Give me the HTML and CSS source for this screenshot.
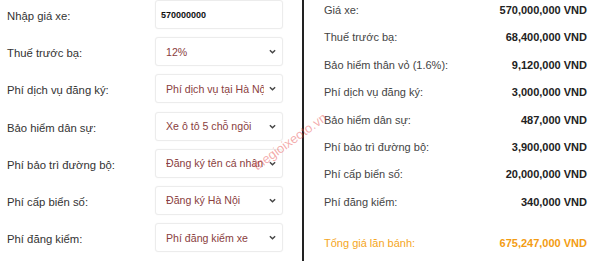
FILE: index.html
```html
<!DOCTYPE html>
<html lang="vi">
<head>
<meta charset="utf-8">
<link rel="stylesheet" href="styles.css">
</head>
<body>
<div class="page">
  <div class="form">
    <div class="row"><span class="label">Nhập giá xe:</span><div class="box input">570000000</div></div>
    <div class="row"><span class="label">Thuế trước bạ:</span><div class="box select"><span class="val">12%</span><svg class="chev" viewBox="0 0 8 5"><polyline points="1,1 4,4 7,1"/></svg></div></div>
    <div class="row"><span class="label">Phí dịch vụ đăng ký:</span><div class="box select"><span class="val">Phí dịch vụ tại Hà Nội</span><svg class="chev" viewBox="0 0 8 5"><polyline points="1,1 4,4 7,1"/></svg></div></div>
    <div class="row"><span class="label">Bảo hiểm dân sự:</span><div class="box select"><span class="val">Xe ô tô 5 chỗ ngồi</span><svg class="chev" viewBox="0 0 8 5"><polyline points="1,1 4,4 7,1"/></svg></div></div>
    <div class="row"><span class="label">Phí bảo trì đường bộ:</span><div class="box select"><span class="val">Đăng ký tên cá nhân</span><svg class="chev" viewBox="0 0 8 5"><polyline points="1,1 4,4 7,1"/></svg></div></div>
    <div class="row"><span class="label">Phí cấp biển số:</span><div class="box select"><span class="val">Đăng ký Hà Nội</span><svg class="chev" viewBox="0 0 8 5"><polyline points="1,1 4,4 7,1"/></svg></div></div>
    <div class="row"><span class="label">Phí đăng kiểm:</span><div class="box select"><span class="val">Phí đăng kiểm xe</span><svg class="chev" viewBox="0 0 8 5"><polyline points="1,1 4,4 7,1"/></svg></div></div>
  </div>
  <div class="divider"></div>
  <div class="summary">
    <div class="line"><span>Giá xe:</span><b>570,000,000 VND</b></div>
    <div class="line"><span>Thuế trước bạ:</span><b>68,400,000 VND</b></div>
    <div class="line"><span>Bảo hiểm thân vỏ (1.6%):</span><b>9,120,000 VND</b></div>
    <div class="line"><span>Phí dịch vụ đăng ký:</span><b>3,000,000 VND</b></div>
    <div class="line"><span>Bảo hiểm dân sự:</span><b>487,000 VND</b></div>
    <div class="line"><span>Phí bảo trì đường bộ:</span><b>3,900,000 VND</b></div>
    <div class="line"><span>Phí cấp biển số:</span><b>20,000,000 VND</b></div>
    <div class="line"><span>Phí đăng kiểm:</span><b>340,000 VND</b></div>
    <div class="line total"><span>Tổng giá lăn bánh:</span><b>675,247,000 VND</b></div>
  </div>
  <div class="watermark">thegioixeoto.vn</div>
</div>
</body>
</html>
```

FILE: styles.css
```css
* { box-sizing: border-box; }
html, body { margin: 0; padding: 0; background: #fff; }
body {
  font-family: "Liberation Sans", Arial, sans-serif;
  width: 600px;
  height: 261px;
  overflow: hidden;
}
.page {
  position: relative;
  display: flex;
  height: 261px;
}
.form {
  width: 302px;
  padding-left: 7px;
  display: flex;
  flex-direction: column;
  gap: 8.2px;
}
.row {
  display: flex;
  align-items: center;
  height: 29px;
}
.label {
  width: 148px;
  font-size: 11.3px;
  color: #333;
  padding-top: 3px;
}
.box {
  width: 128px;
  height: 29px;
  border: 1px solid #ececec;
  border-radius: 3px;
  background: #fff;
  box-shadow: 0 0 2px rgba(0,0,0,0.04);
  display: flex;
  align-items: center;
}
.input {
  padding-left: 5px;
  font-size: 9px;
  font-weight: bold;
  color: #111;
}
.select {
  padding-left: 10px;
  padding-right: 4px;
  font-size: 10.6px;
  color: #8a4040;
}
.val {
  flex: 1;
  white-space: nowrap;
  overflow: hidden;
}
.chev {
  width: 7px;
  height: 5px;
  margin-left: 5px;
  margin-right: 2px;
  flex: none;
}
.chev polyline {
  fill: none;
  stroke: #444;
  stroke-width: 1.6;
}
.divider {
  width: 2px;
  height: 261px;
  background: #222;
}
.summary {
  flex: 1;
  padding-left: 20px;
  padding-right: 13px;
  display: flex;
  flex-direction: column;
}
.line {
  display: flex;
  justify-content: space-between;
  line-height: 20px;
  margin-bottom: 7.4px;
  font-size: 11px;
  color: #444;
}
.line b {
  color: #222;
  font-size: 11px;
}
.line.total {
  margin-top: 14px;
  color: #f5a623;
}
.line.total b { color: #f39c12; }
.watermark {
  position: absolute;
  left: 246px;
  top: 134px;
  font-size: 13px;
  color: rgba(230, 70, 70, 0.45);
  transform: rotate(-36deg);
  white-space: nowrap;
}
```
